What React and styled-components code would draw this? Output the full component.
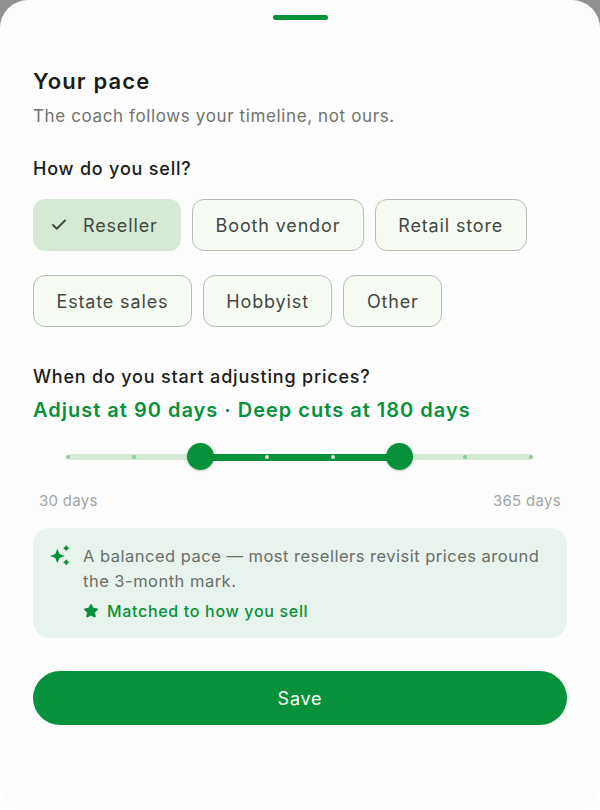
import styled, { createGlobalStyle } from "styled-components";
import { Check, Star } from "lucide-react";

const GlobalStyle = createGlobalStyle`
  * { box-sizing: border-box; }
  html, body { margin: 0; padding: 0; background: linear-gradient(#8f918f 50%, #ffffff 50%); }
  body { font-family: Inter, "Liberation Sans", sans-serif; }
`;

const Sheet = styled.div`
  width: 600px;
  height: 810px;
  background: #fdfdfd;
  border-radius: 28px;
  padding: 15px 33px 0;
  display: flex;
  flex-direction: column;
  overflow: hidden;
`;

const Handle = styled.div`
  width: 55px;
  height: 5px;
  border-radius: 3px;
  background: #07913a;
  align-self: center;
`;

const Title = styled.h1`
  margin: 47px 0 0;
  font-size: 22px;
  line-height: 28px;
  font-weight: 600;
  letter-spacing: 1.15px;
  color: #1a1c1a;
`;

const Subtitle = styled.p`
  margin: 9px 0 0;
  font-size: 17px;
  line-height: 24px;
  letter-spacing: 0.62px;
  color: #6f736f;
`;

const Label = styled.h2`
  margin: ${(p) => p.$top}px 0 0;
  font-size: 18px;
  line-height: 24px;
  font-weight: 500;
  letter-spacing: 0.8px;
  color: #1a1c1a;
`;

const Chips = styled.div`
  display: flex;
  flex-wrap: wrap;
  gap: 24px 11px;
  margin-top: 18px;
`;

const Chip = styled.div`
  height: 52px;
  display: flex;
  align-items: center;
  gap: 15px;
  padding: 0 ${(p) => (p.$selected ? "23.5px" : "22.5px")} 0 ${(p) => (p.$selected ? "17px" : "22.5px")};
  border-radius: 12px;
  border: ${(p) => (p.$selected ? "none" : "1.5px solid #b5bfb3")};
  background: ${(p) => (p.$selected ? "#d5e9d4" : "#f6fcf3")};
  font-size: 18px;
  letter-spacing: 0.85px;
  color: #434843;
`;

const RangeText = styled.div`
  margin-top: 7px;
  font-size: 20px;
  line-height: 28px;
  font-weight: 600;
  letter-spacing: 1px;
  color: #07913a;
`;

const Slider = styled.div`
  position: relative;
  height: 28px;
  margin: 19px 35px 0;
  display: flex;
  align-items: center;
`;

const Track = styled.div`
  width: 100%;
  height: 6px;
  border-radius: 3px;
  background: #d5e9d4;
`;

const ActiveTrack = styled.div`
  position: absolute;
  left: 132px;
  width: 199px;
  top: 10.5px;
  height: 7px;
  background: #07913a;
`;

const Tick = styled.span`
  position: absolute;
  top: 12px;
  width: 4px;
  height: 4px;
  margin-left: -2px;
  border-radius: 50%;
  background: ${(p) => (p.$on ? "#d5e9d4" : "#86cd9c")};
`;

const Thumb = styled.span`
  position: absolute;
  top: 0;
  width: 27px;
  height: 27px;
  margin-left: -13.5px;
  border-radius: 50%;
  background: #07913a;
  box-shadow: 0 1px 3px rgba(0, 0, 0, 0.2);
`;

const Ends = styled.div`
  display: flex;
  justify-content: space-between;
  margin: 19px 6px 0 6px;
  font-size: 15px;
  line-height: 22px;
  letter-spacing: 0.3px;
  color: #a1a5a1;
`;

const Note = styled.div`
  margin-top: 16px;
  height: 110px;
  padding: 16px 17px;
  border-radius: 17px;
  background: #e9f3ed;
  display: flex;
  gap: 10px;
`;

const Sparkle = styled.svg`
  flex: none;
  width: 23px;
  height: 23px;
  margin-left: -1px;
  color: #07913a;
`;

const NoteBody = styled.div`
  display: flex;
  flex-direction: column;
  margin-left: 1px;
`;

const NoteText = styled.p`
  margin: 0;
  font-size: 16.5px;
  line-height: 25px;
  letter-spacing: 0.49px;
  color: #6a6e6a;
`;

const Matched = styled.div`
  margin: 5px 0 0;
  display: flex;
  align-items: center;
  gap: 8px;
  font-size: 16px;
  line-height: 24px;
  font-weight: 500;
  letter-spacing: 0.68px;
  color: #07913a;
`;

const SaveButton = styled.button`
  margin-top: 33px;
  height: 54px;
  width: 100%;
  border: none;
  border-radius: 27px;
  background: #07913a;
  color: #fff;
  font: 400 18px Inter, "Liberation Sans", sans-serif;
  letter-spacing: 0.8px;
`;

const chips = [
  { name: "Reseller", selected: true },
  { name: "Booth vendor" },
  { name: "Retail store" },
  { name: "Estate sales" },
  { name: "Hobbyist" },
  { name: "Other" },
];

const ticks = [0, 66, 132, 199, 265, 331, 397, 463];

function App() {
  return (
    <>
      <GlobalStyle />
      <Sheet>
        <Handle />
        <Title>Your pace</Title>
        <Subtitle>The coach follows your timeline, not ours.</Subtitle>

        <Label $top={29}>How do you sell?</Label>
        <Chips>
          {chips.map((chip) => (
            <Chip key={chip.name} $selected={chip.selected}>
              {chip.selected && <Check size={18} strokeWidth={2.5} />}
              {chip.name}
            </Chip>
          ))}
        </Chips>

        <Label $top={38}>When do you start adjusting prices?</Label>
        <RangeText>Adjust at 90 days · Deep cuts at 180 days</RangeText>

        <Slider>
          <Track />
          <ActiveTrack />
          {ticks.map((x) => (
            <Tick key={x} $on={x > 132 && x < 331} style={{ left: x }} />
          ))}
          <Thumb style={{ left: 132 }} />
          <Thumb style={{ left: 331 }} />
        </Slider>
        <Ends>
          <span>30 days</span>
          <span>365 days</span>
        </Ends>

        <Note>
          <Sparkle viewBox="0 0 22 22" fill="currentColor">
            <path d="M8 4.5 L10 9.5 L15 11.5 L10 13.5 L8 18.5 L6 13.5 L1 11.5 L6 9.5 Z" />
            <path d="M16.5 1 L17.7 2.8 L19.5 4 L17.7 5.2 L16.5 7 L15.3 5.2 L13.5 4 L15.3 2.8 Z" />
            <path d="M16.5 14.5 L17.7 16.3 L19.5 17.5 L17.7 18.7 L16.5 20.5 L15.3 18.7 L13.5 17.5 L15.3 16.3 Z" />
          </Sparkle>
          <NoteBody>
            <NoteText>
              A balanced pace — most resellers revisit prices around the 3-month mark.
            </NoteText>
            <Matched>
              <Star size={16} fill="currentColor" strokeWidth={1.5} />
              Matched to how you sell
            </Matched>
          </NoteBody>
        </Note>

        <SaveButton>Save</SaveButton>
      </Sheet>
    </>
  );
}

export default App;
